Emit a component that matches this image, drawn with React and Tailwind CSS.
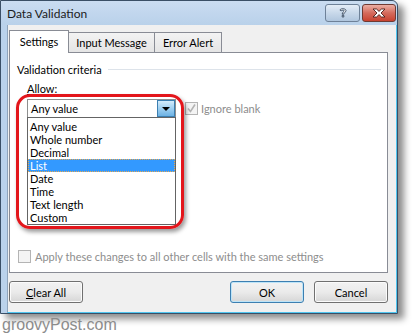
import React from 'react';

const items = ['Any value', 'Whole number', 'Decimal', 'List', 'Date', 'Time', 'Text length', 'Custom'];

const HelpIcon = () => (
  <svg width="10" height="12" viewBox="0 0 10 12">
    <path
      d="M2 3.2 C2 1.2 8 1.2 8 3.6 C8 5.2 5.8 5.4 5.8 7.2 L4.2 7.2 C4.2 5 6.2 4.8 6.2 3.8 C6.2 2.8 3.8 2.8 3.8 3.8 Z M4.2 8.4 H5.8 V10 H4.2 Z"
      fill="#ffffff"
      stroke="#34465c"
      strokeWidth="0.9"
    />
  </svg>
);

const CloseIcon = () => (
  <svg width="14" height="10" viewBox="0 0 14 10">
    <path
      d="M1 1 H4.5 L7 3.4 L9.5 1 H13 L9 5 L13 9 H9.5 L7 6.6 L4.5 9 H1 L5 5 Z"
      fill="#ffffff"
      stroke="#4a1e1a"
      strokeWidth="0.9"
      strokeLinejoin="round"
    />
  </svg>
);

const Check = ({ color }) => (
  <svg width="11" height="11" viewBox="0 0 11 11">
    <path d="M2 5.5 L4.5 8.5 L9 1.5" fill="none" stroke={color} strokeWidth="1.6" />
  </svg>
);

const Button = ({ children, focused }) => (
  <div
    className={`w-[74px] h-[22px] flex items-center justify-center rounded-[3px] border bg-gradient-to-b from-[#f2f2f2] via-[#ebebeb] to-[#d6d6d6] ${
      focused ? 'border-[#3c7fb1] shadow-[inset_0_0_0_1px_#bde4f8]' : 'border-[#707070] shadow-[inset_0_0_0_1px_#fbfbfb]'
    }`}
  >
    {children}
  </div>
);

export default function App() {
  return (
    <div className="w-[418px] h-[335px] bg-white font-['Lato',sans-serif] text-[11px] text-black leading-none">
      {/* Ventana */}
      <div className="w-[398px] h-[314px] flex flex-col bg-[#bad2eb] border border-[#3a4f66] rounded-tr-[6px] shadow-[6px_5px_7px_rgba(0,0,0,0.45)]">
        {/* Barra de título */}
        <div className="h-[24px] flex justify-between pl-[6px] bg-gradient-to-b from-[#cadcf1] to-[#b9d1ea] rounded-tr-[6px]">
          <span className="mt-[7px] text-[12px] text-[#1b1b1b]">Data Validation</span>
          <div className="flex gap-[2px] mt-[3px] mr-[1px]">
            <div className="w-[35px] h-[18px] flex items-center justify-center rounded-[3px] border border-[#6e8198] bg-gradient-to-b from-[#e4edf7] via-[#c8d8ea] to-[#b0c6de]">
              <HelpIcon />
            </div>
            <div className="w-[34px] h-[18px] flex items-center justify-center rounded-[3px] border border-[#6e3a33] bg-gradient-to-b from-[#eaaea4] via-[#d46a5c] to-[#c8412f]">
              <CloseIcon />
            </div>
          </div>
        </div>

        {/* Área cliente */}
        <div className="flex-1 ml-[6px] bg-[#f0f0f0] border-l border-l-[#8fa4bb] border-r border-r-[#4fc6f0] border-b border-b-[#4fc6f0] pl-[1px] pt-[5px]">
          {/* Pestañas */}
          <div className="flex items-end">
            <div className="relative z-10 w-[60px] h-[23px] -mb-px bg-white border border-b-0 border-[#898c95] flex items-center justify-center pb-[1px]">
              Settings
            </div>
            <div className="w-[87px] h-[20px] -ml-px bg-gradient-to-b from-[#f3f3f3] to-[#e5e5e5] border border-b-0 border-[#898c95] flex items-center justify-center">
              Input Message
            </div>
            <div className="w-[68px] h-[20px] -ml-px bg-gradient-to-b from-[#f3f3f3] to-[#e5e5e5] border border-b-0 border-[#898c95] flex items-center justify-center">
              Error Alert
            </div>
          </div>

          {/* Panel */}
          <div className="relative w-[379px] h-[221px] bg-white border border-[#898c95] flex flex-col pl-[7px] pr-[6px] pt-[9px]">
            <div className="h-[14px] flex items-center gap-[6px]">
              <span>Validation criteria</span>
              <div className="flex-1 h-px bg-[#dde3ea]" />
            </div>

            <div className="pl-[10px] mt-[5px]">
              <div className="h-[14px] flex items-center">
                <span><span className="underline">A</span>llow:</span>
              </div>

              <div className="mt-[4px] flex items-center">
                <div className="relative w-[149px] h-[19px] bg-white border border-[#8e8f8f] flex items-center pl-[3px]">
                  <span>Any value</span>
                  <div className="absolute right-0 top-0 w-[18px] h-[17px] border border-[#3c7fb1] bg-gradient-to-b from-[#d4ecfb] via-[#9fd0f1] to-[#6cb2e4] flex items-center justify-center">
                    <div className="w-0 h-0 border-l-[4px] border-r-[4px] border-t-[4px] border-l-transparent border-r-transparent border-t-black" />
                  </div>

                  {/* Lista desplegable */}
                  <div className="absolute left-[-1px] top-[17px] z-10 w-[149px] h-[108px] bg-white border border-[#646464] pt-[2px]">
                    {items.map((item) => (
                      <div
                        key={item}
                        className={`h-[13px] flex items-center pl-[2px] ${
                          item === 'List' ? 'bg-[#3399ff] text-white outline outline-1 outline-dotted outline-[#e8a94f] -outline-offset-1' : ''
                        }`}
                      >
                        {item}
                      </div>
                    ))}
                  </div>
                </div>

                <div className="ml-[9px] w-[13px] h-[13px] border border-[#b4b4b4] bg-[#f4f4f4] flex items-center justify-center">
                  <Check color="#b3b3b3" />
                </div>
                <span className="ml-[3px] text-[#8d8d8d]">Ignore blank</span>
              </div>
            </div>

            {/* Marco rojo de resaltado */}
            <div className="absolute left-[6px] top-[41px] w-[168px] h-[135px] border-[3px] border-[#e3161b] rounded-[14px] shadow-[2px_3px_4px_rgba(0,0,0,0.4)] z-20 pointer-events-none" />

            <div className="mt-auto mb-[9px] pl-[1px] flex items-center">
              <div className="w-[13px] h-[13px] border border-[#b4b4b4] bg-[#f4f4f4]" />
              <span className="ml-[4px] text-[#8d8d8d]">Apply these changes to all other cells with the same settings</span>
            </div>
          </div>

          {/* Botones */}
          <div className="w-[379px] mt-[8px] flex justify-between">
            <Button>
              <span><span className="underline">C</span>lear All</span>
            </Button>
            <div className="flex gap-[10px]">
              <Button focused>OK</Button>
              <Button>Cancel</Button>
            </div>
          </div>
        </div>
      </div>

      <div className="mt-[3px] pl-[2px] text-[16px] text-[#8c8c8c] font-['Liberation_Sans',sans-serif]">groovyPost.com</div>
    </div>
  );
}
